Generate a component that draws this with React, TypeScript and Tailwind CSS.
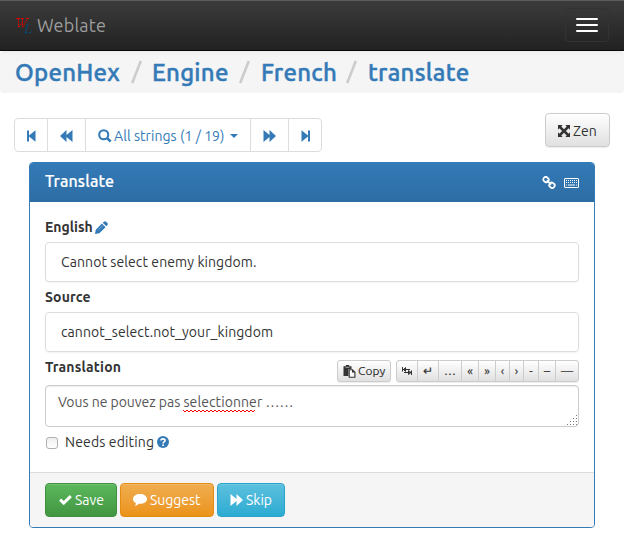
import React from 'react';

type IconProps = { className?: string };

const FastBackward = () => (
  <svg width="9" height="12" viewBox="0 0 9 12" fill="currentColor"><path d="M0 .5h2v5L8.500 .2v11.600L2 6.500v5H0z" /></svg>
);
const FastForward = () => (
  <svg width="9" height="12" viewBox="0 0 9 12" fill="currentColor"><path d="M9 .5H7v5L.5 .2v11.600L7 6.500v5h2z" /></svg>
);
const Backward = () => (
  <svg width="13" height="12" viewBox="0 0 13 12" fill="currentColor"><path d="M6.500 .1v5L12.500 .1v11.800L6.500 6.900v5L0 6z" /></svg>
);
const Forward = ({ className }: IconProps) => (
  <svg className={className} width="13" height="12" viewBox="0 0 13 12" fill="currentColor"><path d="M6.500 .1v5L.5 .1v11.800l6-5v5L13 6z" /></svg>
);
const Search = () => (
  <svg width="14" height="14" viewBox="0 0 13 13" fill="none" stroke="currentColor"><circle cx="5.300" cy="5.300" r="4.200" strokeWidth="1.900" /><path d="M8.600 8.600l3.200 3.100" strokeWidth="2.300" /></svg>
);
const Fullscreen = () => (
  <svg width="12" height="12" viewBox="0 0 13 12" preserveAspectRatio="none" fill="currentColor"><path d="M0 0h5L3.600 1.400 6.500 4.200 9.400 1.400 8 0h5v4.800L11.500 3.300 8.600 6l2.900 2.700L13 7.200V12H8l1.400-1.400-2.900-2.800-2.900 2.800L5 12H0V7.200l1.500 1.500L4.400 6 1.500 3.300 0 4.800z" /></svg>
);
const Link = () => (
  <svg width="14" height="13" viewBox="0 0 14 13" fill="none" stroke="currentColor" strokeWidth="1.800"><rect x="1.300" y="1.200" width="5.400" height="4.800" rx="2.200" transform="rotate(40 4 3.600)" /><rect x="7.300" y="6.900" width="5.400" height="4.800" rx="2.200" transform="rotate(40 10 9.300)" /><path d="M4.700 4.500l4.600 4" /></svg>
);
const Keyboard = () => (
  <svg width="15" height="10" viewBox="0 0 15 10" fill="none" stroke="currentColor"><rect x=".5" y=".5" width="14" height="9" rx=".5" strokeWidth="1" /><path d="M2 2.500h11M2 4.500h11" strokeWidth="1" strokeDasharray="1 1" /><path d="M2 7h1M4 7h7M12 7h1" strokeWidth="1.200" /></svg>
);
const Pencil = () => (
  <svg width="13" height="13" viewBox="0 0 12 12" fill="currentColor"><path d="M8 .9Q9.200 -.3 10.200 .6l1.300 1.300q.8.900-.1 2l-.9.900L7.100 1.700zM6.400 2.400L9.700 5.700 4 11.300 0 12l.7-4z" /><path d="M2.800 8.600l4.700-4.700" stroke="#8fbce0" strokeWidth=".6" /></svg>
);
const Paste = () => (
  <svg width="13" height="13" viewBox="0 0 12 13" fill="currentColor"><path d="M0 1.300h2.300V0h3.400v1.300H8V4H5v7H0z" /><path d="M2 2.300h4" stroke="#ddd" strokeWidth=".7" /><path d="M5.700 4.700h3.100l2.600 2.600v5H5.700z" fill="#fafafa" stroke="currentColor" strokeWidth="1.100" /><path d="M8.500 4.300v3.300h3.400z" /></svg>
);
const Help = () => (
  <svg width="12" height="12" viewBox="0 0 12 12"><circle cx="6" cy="6" r="6" fill="#337ab7" /><path d="M4 4.600c0-2.300 4-2.300 4-.1C8 6 6.100 5.900 6.100 7.500" fill="none" stroke="#fff" strokeWidth="1.700" /><path d="M5.200 8.400H7V10H5.200z" fill="#fff" /></svg>
);
const Check = () => (
  <svg width="13" height="10" viewBox="0 0 13 10" fill="none" stroke="currentColor" strokeWidth="3"><path d="M1.100 4.700l3.600 3.400L11.800 1.200" /></svg>
);
const Comment = () => (
  <svg width="14" height="12" viewBox="0 0 14 12" fill="currentColor"><path d="M7 0c4 0 7 2.100 7 4.900s-3 4.900-7 4.900l-1.200-.1Q4.300 11.600 1.700 12q1.400-1.200 1.200-2.900C1.200 8.200 0 6.700 0 4.900 0 2.100 3 0 7 0z" /></svg>
);
const TabSymbol = () => (
  <svg width="10" height="8" viewBox="0 0 10 8" fill="none" stroke="currentColor" strokeWidth="1"><path d="M.5 0v4.500M1 2.500h7M3.500 .5v4M3.500 .5L1.500 2.500l2 2M9.500 3.500V8M2 5.500h7M6.500 3.500v4M6.500 3.500L9 5.500 6.500 7.500" /></svg>
);
const Logo = () => (
  <svg width="17" height="17" viewBox="0 0 17 17" fill="none"><path d="M0 1.500h4M5 1.500h3M10 1.500h3" stroke="#d80000" /><path d="M2.500 2v8.500M3 10l3.500-5M6.500 2v8.500M7 10l4-8" stroke="#d80000" strokeWidth="1" strokeDasharray="1.600 .6" /><path d="M11.500 7l-2 9M8.500 16h3M13 15.500h2M15.500 13v1" stroke="#064a7d" strokeWidth="1.200" strokeDasharray="3 .7" /></svg>
);

const Crumb = ({ className, children }: { className: string; children: string }) => (
  <a className={`block pt-px whitespace-nowrap text-[#337ab7] ${className}`}>{children}</a>
);
const Slash = () => (
  <svg className="shrink-0" width="11" height="24" viewBox="0 0 11 24" stroke="#ccc" strokeWidth="2.600"><path d="M1.200 23L9.800 1" /></svg>
);

const symbols: { text: React.ReactNode; cls: string }[] = [
  { text: <TabSymbol />, cls: 'w-[21px]' },
  { text: '↵', cls: 'w-[21px]' },
  { text: '…', cls: 'w-[23px]' },
  { text: '«', cls: 'w-[17px]' },
  { text: '»', cls: 'w-[17px]' },
  { text: '‹', cls: 'w-[14px]' },
  { text: '›', cls: 'w-[14px]' },
  { text: '-', cls: 'w-[15px]' },
  { text: '–', cls: 'w-[17px]' },
  { text: '—', cls: 'w-[22px]' },
];

export default function App() {
  return (
    <div className="h-[540px] w-[624px] overflow-hidden bg-white font-['Ubuntu','Noto_Sans',sans-serif] text-[14px] leading-5 text-[#333]">
      <nav className="flex h-[51px] items-center justify-between border-b border-[#080808] bg-linear-to-b from-[#3c3c3c] to-[#222] pr-[15px] pl-[16px] shadow-[inset_0_1px_0_#5c5c5c]">
        <div className="flex items-center gap-1">
          <Logo />
          <span className="w-[72px] text-[18px] tracking-[0.18px] whitespace-nowrap text-[#9d9d9d]">Weblate</span>
        </div>
        <button className="flex h-[34px] w-[44px] flex-col items-center justify-center gap-1 rounded-[4px] border border-[#333]">
          <span className="h-0.5 w-[22px] rounded-[1px] bg-white" />
          <span className="h-0.5 w-[22px] rounded-[1px] bg-white" />
          <span className="h-0.5 w-[22px] rounded-[1px] bg-white" />
        </button>
      </nav>
      <div className="flex h-[42px] items-center rounded-[4px] bg-[#f5f5f5] bg-linear-to-b from-[#ededed] to-[#f5f5f5] to-10% pl-[15px] text-[24px] leading-[42px] font-medium tracking-[0.25px] [-webkit-text-stroke:0.45px_#337ab7]">
        <Crumb className="w-[116px]">OpenHex</Crumb><Slash />
        <Crumb className="ml-[10px] w-[87px]">Engine</Crumb><Slash />
        <Crumb className="ml-[11px] w-[85px]">French</Crumb><Slash />
        <Crumb className="ml-[11px] w-[110px]">translate</Crumb>
      </div>

      <div className="flex h-[69px] items-start justify-between px-[14px] pt-5">
        <div className="mt-[5px] flex h-[34px] divide-x divide-[#ddd] rounded-[4px] border border-[#ddd] text-[#337ab7]">
          <a className="flex w-[33px] items-center justify-center pt-px"><FastBackward /></a>
          <a className="flex w-[38px] items-center justify-center pt-px"><Backward /></a>
          <a className="flex w-[165px] items-center pt-px pl-3">
            <Search />
            <span className="ml-[2px] w-[112px] tracking-[0.06px] whitespace-nowrap">All strings (1 / 19)</span>
            <span className="ml-[4px] border-x-4 border-t-4 border-x-transparent border-t-[#337ab7]" />
          </a>
          <a className="flex w-[38px] items-center justify-center pt-px"><Forward /></a>
          <a className="flex w-[32px] items-center justify-center pt-px"><FastForward /></a>
        </div>
        <button className="flex h-[34px] w-[65px] items-center gap-[3px] rounded-[4px] border border-[#ccc] bg-linear-to-b from-white to-[#e0e0e0] pt-[2px] pl-3 shadow-[0_1px_1px_rgba(0,0,0,0.075)]">
          <Fullscreen /><span>Zen</span>
        </button>
      </div>

      <section className="ml-[29px] flex h-[366px] w-[566px] flex-col overflow-hidden rounded-[4px] border border-[#337ab7]">
        <header className="flex h-[39px] items-center bg-linear-to-b from-[#337ab7] to-[#2e6da4] pr-[15px] pl-[15px] text-white">
          <h3 className="flex-1 pb-[3px] text-[16px] font-medium tracking-[0.12px] [-webkit-text-stroke:0.2px_white]">Translate</h3>
          <Link /><span className="w-2" /><Keyboard />
        </header>
        <div className="flex h-[270px] flex-col px-[15px] pt-[15px]">
          <div className="flex h-5 items-center gap-[2px] font-bold"><span>English</span><span className="text-[#337ab7]"><Pencil /></span></div>
          <div className="mt-[5px] flex h-10 items-center rounded-[4px] border border-[#ddd] pl-[15px] tracking-[0.09px] shadow-[0_1px_2px_rgba(0,0,0,0.05)]">Cannot select enemy kingdom.</div>
          <div className="mt-[5px] h-5 font-bold tracking-[0.15px]">Source</div>
          <div className="mt-[5px] flex h-10 items-center rounded-[4px] border border-[#ddd] pl-[15px] tracking-[0.08px] shadow-[0_1px_2px_rgba(0,0,0,0.05)]">cannot_select.not_your_kingdom</div>
          <div className="mt-[5px] flex h-[28px]">
            <span className="flex-1 font-bold tracking-[0.18px]">Translation</span>
            <button className="mt-[3px] flex h-[22px] w-[54px] items-center gap-[2px] rounded-[3px] border border-[#ccc] bg-linear-to-b from-white to-[#e0e0e0] pl-[5px] text-[12px] tracking-[0.05px] shadow-[0_1px_1px_rgba(0,0,0,0.075)] [-webkit-text-stroke:0.15px_#333]">
              <Paste /><span>Copy</span>
            </button>
            <div className="mt-[3px] ml-[5px] flex h-[22px] divide-x divide-[#ccc] overflow-hidden rounded-[3px] border border-[#ccc] bg-linear-to-b from-white to-[#e0e0e0] text-[12px] shadow-[0_1px_1px_rgba(0,0,0,0.075)] [-webkit-text-stroke:0.2px_#333]">
              {symbols.map((s, i) => <button key={i} className={`flex items-center justify-center ${s.cls}`}>{s.text}</button>)}
            </div>
          </div>
          <div className="relative h-[42px] rounded-[4px] border border-[#ccc] pt-[6px] pl-3 whitespace-nowrap text-[#555] shadow-[inset_0_1px_1px_rgba(0,0,0,0.075)]">
            <span className="tracking-[-0.03px]">Vous ne pouvez pas </span>
            <span className="relative tracking-[0.09px]">selectionner
              <svg className="absolute top-[15px] left-0" width="80" height="4" fill="none" stroke="#f00"><path d="M0 1l2 2 2-2 2 2 2-2 2 2 2-2 2 2 2-2 2 2 2-2 2 2 2-2 2 2 2-2 2 2 2-2 2 2 2-2 2 2 2-2 2 2 2-2 2 2 2-2 2 2 2-2 2 2 2-2 2 2 2-2 2 2 2-2 2 2 2-2 2 2 2-2" /></svg>
            </span>
            <span> ……</span>
            <svg className="absolute right-0 bottom-0" width="12" height="12" fill="#777"><path d="M10 1h1v1h-1zM7 4h1v1H7zM10 4h1v1h-1zM4 7h1v1H4zM7 7h1v1H7zM10 7h1v1h-1zM1 10h1v1H1zM4 10h1v1H4zM7 10h1v1H7zM10 10h1v1h-1z" /></svg>
          </div>
          <label className="mt-[5px] flex h-5 items-center">
            <span className="mt-[2px] ml-px h-3 w-3 rounded-[3px] border border-[#b0b0b0] bg-linear-to-b from-[#eee] to-white" />
            <span className="mr-[3px] ml-[7px] tracking-[0.15px]">Needs editing</span><Help />
          </label>
        </div>
        <footer className="flex flex-1 items-start gap-[3px] border-t border-[#ddd] bg-[#f5f5f5] px-[15px] pt-[10px] text-white [text-shadow:0_-1px_0_rgba(0,0,0,0.2)]">
          <button className="flex h-[34px] w-[72px] items-center gap-[3px] rounded-[4px] border border-[#3e8f3e] bg-linear-to-b from-[#5cb85c] to-[#419641] pl-[13px] shadow-[inset_0_1px_0_rgba(255,255,255,0.15)]"><Check /><span>Save</span></button>
          <button className="flex h-[34px] w-[94px] items-center gap-[3px] rounded-[4px] border border-[#e38d13] bg-linear-to-b from-[#f0ad4e] to-[#eb9316] pl-[12px] shadow-[inset_0_1px_0_rgba(255,255,255,0.15)]"><Comment /><span className="tracking-[-0.05px]">Suggest</span></button>
          <button className="flex h-[34px] w-[68px] items-center gap-[3px] rounded-[4px] border border-[#28a4c9] bg-linear-to-b from-[#5bc0de] to-[#2aabd2] pl-[12px] shadow-[inset_0_1px_0_rgba(255,255,255,0.15)]"><Forward /><span>Skip</span></button>
        </footer>
      </section>
    </div>
  );
}
